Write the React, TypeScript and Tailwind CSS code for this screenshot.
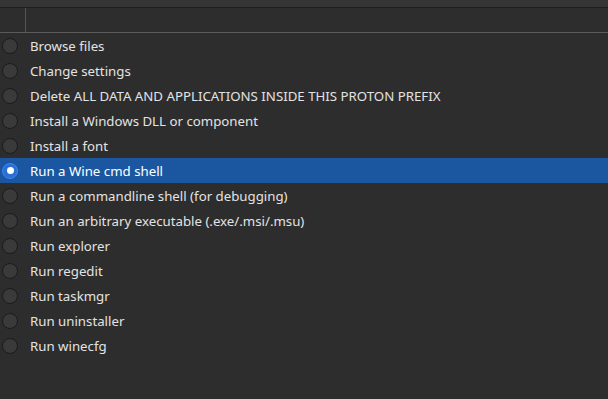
const items = [
  'Browse files',
  'Change settings',
  'Delete ALL DATA AND APPLICATIONS INSIDE THIS PROTON PREFIX',
  'Install a Windows DLL or component',
  'Install a font',
  'Run a Wine cmd shell',
  'Run a commandline shell (for debugging)',
  'Run an arbitrary executable (.exe/.msi/.msu)',
  'Run explorer',
  'Run regedit',
  'Run taskmgr',
  'Run uninstaller',
  'Run winecfg',
];

const selected = 5;

function Radio({ checked }: { checked: boolean }) {
  if (checked) {
    return (
      <span className="shrink-0 w-[16px] h-[16px] rounded-full bg-[#2a6fd6] border border-[#3d86ea] flex items-center justify-center">
        <span className="w-[7px] h-[7px] rounded-full bg-white" />
      </span>
    );
  }
  return <span className="shrink-0 w-[16px] h-[16px] rounded-full bg-[#3a3a3a] border border-[#1b1b1b]" />;
}

export default function App() {
  return (
    <div
      className="w-[608px] h-[399px] bg-[#2d2d2d] text-[#e3e3e3] text-[13.25px] overflow-hidden"
      style={{ fontFamily: '"Noto Sans", sans-serif' }}
    >
      <div className="h-[7px] bg-[#353535] border-b border-[#1f1f1f] box-content" />
      <div className="h-[25px] flex border-b border-[#5a5a5a] box-border">
        <div className="w-[26px] border-r border-[#555555]" />
        <div className="flex-1" />
      </div>
      <div className="flex flex-col">
        {items.map((item, i) => (
          <div
            key={item}
            className={`h-[25px] flex items-center gap-[12px] pl-[2px] ${i === selected ? 'bg-[#1b57a1] text-white' : ''}`}
          >
            <Radio checked={i === selected} />
            <span className="leading-[25px] pt-[1px]">{item}</span>
          </div>
        ))}
      </div>
    </div>
  );
}
